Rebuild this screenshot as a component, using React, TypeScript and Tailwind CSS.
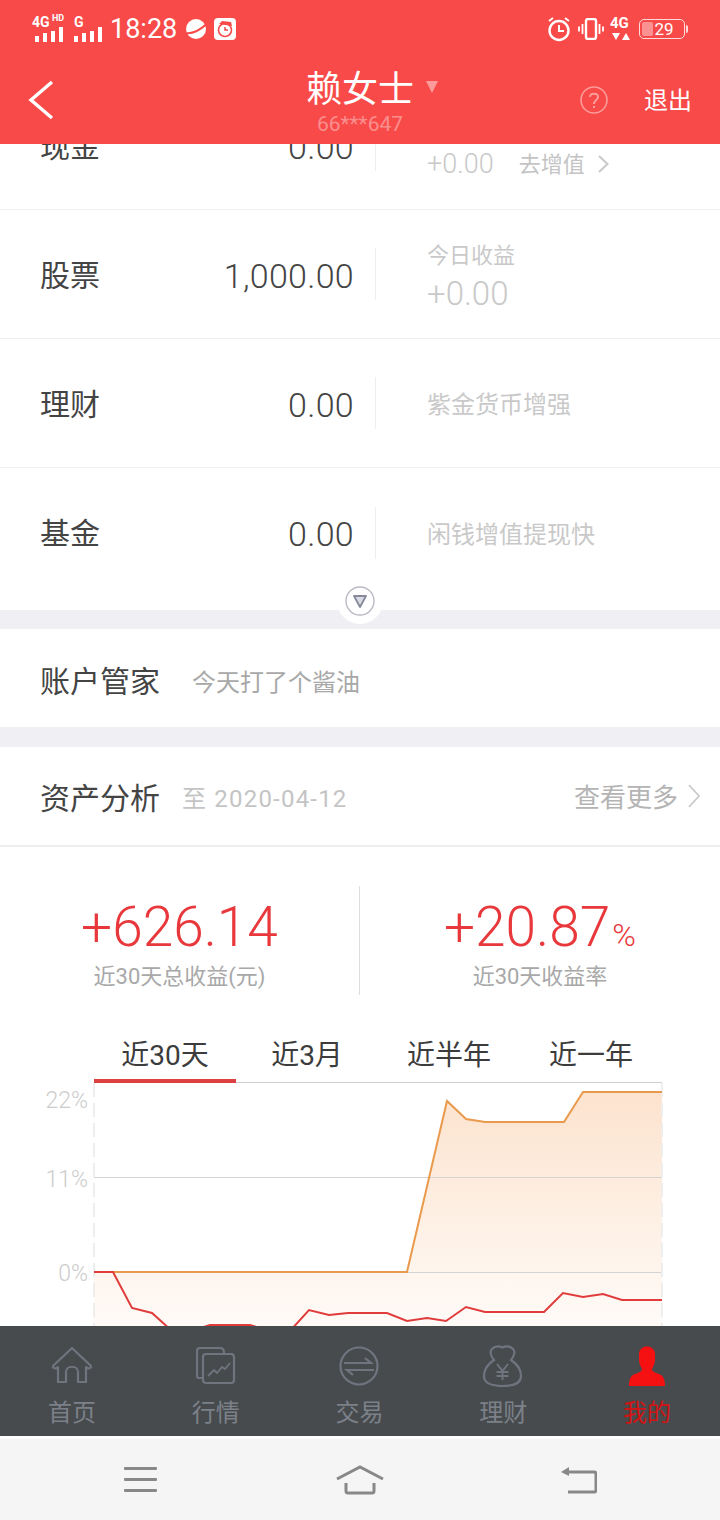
import React from 'react'

const font = { fontFamily: 'Roboto, "Noto Sans CJK SC", sans-serif' }

const assets = [
  { name: '现金', value: '0.00', gain: '+0.00', link: '去增值' },
  { name: '股票', value: '1,000.00', title: '今日收益', gain: '+0.00' },
  { name: '理财', value: '0.00', hint: '紫金货币增强' },
  { name: '基金', value: '0.00', hint: '闲钱增值提现快' },
]

const orange =
  '94,1272 407,1272 447,1101 466,1119 485,1122 564,1122 583,1092 662,1092'
const red =
  '94,1272 113,1272 132,1308 152,1313 172,1331 191,1331 210,1325 250,1325 270,1331 290,1331 309,1310 329,1315 348,1313 387,1313 407,1321 427,1318 446,1321 466,1307 485,1312 544,1312 563,1293 583,1297 603,1294 622,1300 662,1300'

function SignalBars() {
  return (
    <g fill="#fff">
      <rect x="0" y="9" width="4" height="6" />
      <rect x="8" y="6" width="4" height="9" />
      <rect x="16" y="4" width="4" height="11" />
      <rect x="24" y="0" width="4" height="15" />
    </g>
  )
}

function StatusBar() {
  return (
    <div className="flex h-[56px] items-center justify-between pl-[32px] pr-[32px] pt-[2px]">
      <div className="flex items-center">
        <div className="relative h-[26px] w-[32px]">
          <span className="absolute left-0 top-[-3px] text-[14px] font-bold leading-[18px] text-white">4G</span>
          <span className="absolute left-[20px] top-[-4px] text-[9px] font-bold leading-[12px] text-white">HD</span>
          <svg className="absolute bottom-0 left-[3px]" width="28" height="15">
            <SignalBars />
          </svg>
        </div>
        <div className="relative ml-[10px] h-[26px] w-[28px]">
          <span className="absolute left-[0px] top-[-3px] text-[14px] font-bold leading-[18px] text-white">G</span>
          <svg className="absolute bottom-0 left-0" width="28" height="15">
            <SignalBars />
          </svg>
        </div>
        <span className="ml-[8px] text-[27px] leading-[30px] text-white">18:28</span>
        <svg className="ml-[8px]" width="22" height="22" viewBox="0 0 22 22">
          <circle cx="11" cy="11" r="10" fill="#fff" />
          <path d="M0.5 15 C7 16 15 12 21.5 6" stroke="#f84a48" strokeWidth="2" fill="none" />
        </svg>
        <svg className="ml-[7px]" width="22" height="22" viewBox="0 0 22 22">
          <rect x="0" y="0" width="22" height="22" rx="4" fill="#fff" />
          <circle cx="11" cy="12" r="6.5" fill="none" stroke="#f84a48" strokeWidth="1.6" />
          <path d="M5 6 L8 3 L17 4 L18 8 Z" fill="#f84a48" />
          <path d="M11 9 V12 H14" fill="none" stroke="#f84a48" strokeWidth="1.5" />
        </svg>
      </div>
      <div className="flex items-center">
        <svg width="24" height="26" viewBox="0 0 24 26" fill="none" stroke="#fff">
          <circle cx="12" cy="14.5" r="9.5" strokeWidth="2.4" />
          <path d="M12 9 V15 H17" strokeWidth="2" />
          <path d="M2 5 L6 2 M22 5 L18 2" strokeWidth="2" />
        </svg>
        <svg className="ml-[7px]" width="26" height="22" viewBox="0 0 26 22" fill="none" stroke="#fff">
          <rect x="8" y="1" width="10" height="20" rx="2" strokeWidth="2.4" />
          <path d="M4.5 6 V16 M21.5 6 V16 M1 8.5 V13.5 M25 8.5 V13.5" strokeWidth="1.8" />
        </svg>
        <div className="relative ml-[6px] h-[24px] w-[22px]">
          <span className="absolute left-0 top-[-3px] text-[15px] font-bold leading-[18px] text-white">4G</span>
          <svg className="absolute bottom-0 left-[2px]" width="18" height="9" viewBox="0 0 18 9" fill="#fff">
            <path d="M0 1 H8 L4 8 Z M10 8 H18 L14 1 Z" />
          </svg>
        </div>
        <div className="relative ml-[7px] flex h-[20px] w-[46px] items-center justify-center rounded-[5px] border border-white/80">
          <div className="absolute bottom-[2px] left-[2px] top-[2px] w-[11px] rounded-[2px] bg-white/40" />
          <span className="relative ml-[4px] text-[17px] leading-[18px] text-white">29</span>
        </div>
        <div className="ml-[1px] h-[8px] w-[2px] rounded-r bg-white/80" />
      </div>
    </div>
  )
}

function Header() {
  return (
    <header className="h-[144px] shrink-0 bg-[#f84a48]">
      <StatusBar />
      <div className="relative flex h-[88px] justify-center">
        <svg className="absolute left-[28px] top-[24px]" width="26" height="40" viewBox="0 0 26 40" fill="none" stroke="#fff" strokeWidth="3.4">
          <path d="M24 2 L3 20 L24 38" />
        </svg>
        <div className="flex flex-col items-center pt-[12px]">
          <span className="text-[36px] leading-[44px] text-white">赖女士</span>
          <span className="text-[21px] leading-[24px] text-white/40">66***647</span>
        </div>
        <svg className="absolute left-[426px] top-[25px]" width="12" height="12" viewBox="0 0 12 12" fill="#ffffff" fillOpacity="0.45">
          <path d="M0 0 H12 L6 12 Z" />
        </svg>
        <svg className="absolute left-[580px] top-[30px]" width="28" height="28" viewBox="0 0 28 28" fill="none" stroke="#ffffff" strokeOpacity="0.45" strokeWidth="1.6">
          <circle cx="14" cy="14" r="13" />
          <path d="M10 11 C10 6.5 18 6.5 18 11 C18 14 14 14 14 18" strokeWidth="2" />
          <path d="M14 20 V22" strokeWidth="2" />
        </svg>
        <span className="absolute left-[644px] top-[29px] text-[24px] leading-[32px] text-white">退出</span>
      </div>
    </header>
  )
}

function AssetRow({ item, last }: { item: (typeof assets)[number]; last: boolean }) {
  return (
    <div className={last ? 'flex h-[129px] items-center pl-[40px]' : 'flex h-[129px] items-center border-b border-[#efefef] pl-[40px]'}>
      <span className="mt-[2px] w-[120px] text-[30px] text-[#444]">{item.name}</span>
      <span className="mt-[4px] w-[194px] text-right text-[34px] font-light tracking-[0.3px] text-[#444]">{item.value}</span>
      <div className="ml-[21px] h-[52px] w-px bg-[#eee]" />
      <div className={item.title ? 'ml-[51px] mt-[9px] text-[#c9c9c9]' : 'ml-[51px] text-[#c9c9c9]'}>
        {item.hint && <p className="mt-[4px] text-[24px]">{item.hint}</p>}
        {item.title && <p className="text-[22px] leading-[30px]">{item.title}</p>}
        {item.gain && (
          <div className={item.title ? 'flex items-center' : 'mt-[38px] flex items-center'}>
            <span className={item.title ? 'text-[33px] font-light leading-[46px]' : 'text-[27px] font-light leading-[46px]'}>{item.gain}</span>
            {item.link && <span className="ml-[25px] text-[22px] text-[#c4c4c4]">{item.link}</span>}
            {item.link && (
              <svg className="ml-[13px]" width="11" height="18" viewBox="0 0 11 18" fill="none" stroke="#c9c9c9" strokeWidth="2">
                <path d="M1 1 L9.5 9 L1 17" />
              </svg>
            )}
          </div>
        )}
      </div>
    </div>
  )
}

function Chart() {
  const tabs = ['近30天', '近3月', '近半年', '近一年']
  return (
    <div>
      <div className="ml-[94px] flex w-[568px] border-b border-[#cfcfcf]">
        {tabs.map((t, i) => (
          <div key={t} className={i === 0 ? 'relative h-[46px] w-[142px] text-center text-[28px] leading-[40px] text-[#3c3c3c]' : 'h-[46px] w-[142px] text-center text-[28px] leading-[40px] text-[#3c3c3c]'}>
            {t}
            {i === 0 && <div className="absolute bottom-[-1px] left-0 h-[4px] w-full bg-[#dc4040]" />}
          </div>
        ))}
      </div>
      <svg width="720" height="260" viewBox="0 1083 720 260" className="block">
        <defs>
          <linearGradient id="area" x1="0" y1="1092" x2="0" y2="1330" gradientUnits="userSpaceOnUse">
            <stop offset="0" stopColor="#fce3ce" />
            <stop offset="1" stopColor="#fffbf8" />
          </linearGradient>
        </defs>
        <polygon points={`${orange} 662,1340 94,1340`} fill="url(#area)" />
        <path d="M94 1177.5 H662 M94 1272.5 H662" stroke="#d4d4d4" strokeWidth="1" />
        <path d="M94 1083 V1340 M662 1083 V1340" stroke="#eeeeee" strokeWidth="2" strokeDasharray="14 6" />
        <polyline points={orange} fill="none" stroke="#e99a4c" strokeWidth="2" />
        <polyline points={red} fill="none" stroke="#e03c3c" strokeWidth="2" />
        <g fill="#cccccc" fontSize="23" fontWeight="300" textAnchor="end">
          <text x="88" y="1108">22%</text>
          <text x="88" y="1187">11%</text>
          <text x="88" y="1281">0%</text>
        </g>
      </svg>
    </div>
  )
}

function TabIcon({ name }: { name: string }) {
  const stroke = '#6f747f'
  if (name === '首页')
    return (
      <svg width="42" height="40" viewBox="0 0 42 40" fill="none" stroke={stroke} strokeWidth="2.2" strokeLinejoin="round">
        <path d="M2 20 L21 2 L40 20 C40 23 37 23 35 21 V36 H27 V26 C27 19 15 19 15 26 V36 H7 V21 C5 23 2 23 2 20 Z" />
      </svg>
    )
  if (name === '行情')
    return (
      <svg width="40" height="38" viewBox="0 0 40 38" fill="none" stroke={stroke} strokeWidth="2.2">
        <path d="M7 31 H3 Q1 31 1 29 V4 Q1 1 4 1 H24 Q28 1 28 6" />
        <rect x="7" y="7" width="31" height="29" rx="3" />
        <path d="M12 29 L18 23 L21 26 L26 20 L29 22 L34 16" strokeWidth="1.8" />
      </svg>
    )
  if (name === '交易')
    return (
      <svg width="40" height="40" viewBox="0 0 40 40" fill="none" stroke={stroke} strokeWidth="2.2">
        <circle cx="20" cy="20" r="18.5" />
        <path d="M5 17 H32 L26 12 M35 24 H8 L14 29" />
      </svg>
    )
  if (name === '理财')
    return (
      <svg width="40" height="42" viewBox="0 0 40 42" fill="none" stroke={stroke} strokeWidth="2.2">
        <path d="M11 15 C8 11 6 7 9 4 C12 1 16 1 19.5 2.5 C23 1 27 1 30 4 C33 7 31 11 28 15 C34 19 38 25 38 31 C38 38 31 41 19.5 41 C8 41 1 38 1 31 C1 25 5 19 11 15 Z" />
        <path d="M14 19 L19.5 26 L25 19 M19.5 26 V35 M13.5 27 H25.5 M13.5 31 H25.5" strokeWidth="2" />
      </svg>
    )
  return (
    <svg width="38" height="40" viewBox="0 0 38 40" fill="#f51111">
      <path d="M11 8 C11 -2 27 -2 27 8 V14 C27 18 25 21 24 23 C24 26 29 27 33 29 C36 31 37 35 37 40 H1 C1 35 2 31 5 29 C9 27 14 26 14 23 C13 21 11 18 11 14 Z" />
    </svg>
  )
}

function TabBar() {
  const tabs = ['首页', '行情', '交易', '理财', '我的']
  return (
    <nav className="grid h-[110px] shrink-0 grid-cols-5 bg-[#474b4e] pr-[1px]">
      {tabs.map((t) => (
        <div key={t} className="flex flex-col items-center pt-[18px]">
          <div className="flex h-[44px] items-center">
            <TabIcon name={t} />
          </div>
          <span className={t === '我的' ? 'mt-[9px] text-[24px] leading-[32px] text-[#d41212]' : 'mt-[9px] text-[24px] leading-[32px] text-[#7c8189]'}>{t}</span>
        </div>
      ))}
    </nav>
  )
}

function SystemNav() {
  return (
    <div className="mt-[3px] flex h-[81px] shrink-0 items-center justify-between bg-[#f5f5f5] pl-[124px] pr-[123px]">
      <svg width="34" height="26" viewBox="0 0 34 26" fill="#888">
        <rect y="0" width="33" height="3" rx="1" />
        <rect y="11" width="33" height="3" rx="1" />
        <rect y="22" width="33" height="3" rx="1" />
      </svg>
      <svg width="48" height="30" viewBox="0 0 48 30" fill="none" stroke="#888" strokeWidth="3">
        <path d="M1 14 L24 2 L47 14" />
        <path d="M10 18 V26 Q10 28 12 28 H36 Q38 28 38 26 V18" />
      </svg>
      <svg width="36" height="28" viewBox="0 0 36 28" fill="none" stroke="#888" strokeWidth="3">
        <path d="M4 6 H33 Q35 6 35 8 V24 Q35 26 33 26 H7" />
        <path d="M0 6 L8 1 V10 Z" fill="#888" stroke="none" />
      </svg>
    </div>
  )
}

export default function App() {
  return (
    <div className="flex h-[1520px] w-[720px] flex-col overflow-hidden bg-white" style={font}>
      <Header />
      <main className="min-h-0 flex-1 overflow-hidden">
        <div className="mt-[-63px]">
          <div className="relative pb-[13px]">
            {assets.map((a, i) => (
              <AssetRow key={a.name} item={a} last={i === assets.length - 1} />
            ))}
            <div className="absolute bottom-[-14px] left-[337px] z-10 flex h-[46px] w-[46px] items-center justify-center rounded-full bg-white">
              <svg width="30" height="30" viewBox="0 0 30 30" fill="none">
                <circle cx="15" cy="15" r="14" stroke="#b9bcc4" strokeWidth="1.4" />
                <path d="M9 10 H21 L15 21 Z" fill="#d9dbe4" stroke="#868a98" strokeWidth="1.8" strokeLinejoin="round" />
              </svg>
            </div>
          </div>
          <div className="h-[19px] bg-[#f0f0f4]" />
          <div className="flex h-[98px] items-center pl-[40px]">
            <span className="mt-[6px] text-[30px] text-[#444]">账户管家</span>
            <span className="ml-[32px] mt-[10px] text-[24px] text-[#a8a8a8]">今天打了个酱油</span>
          </div>
          <div className="h-[20px] bg-[#f0f0f4]" />
          <div className="flex h-[100px] items-center border-b-2 border-[#eeeeee] pl-[40px] pr-[19px]">
            <span className="mt-[4px] text-[30px] text-[#444]">资产分析</span>
            <span className="ml-[22px] mt-[6px] text-[24px] tracking-[1.2px] text-[#c4c4c4]">至 2020-04-12</span>
            <span className="ml-auto mt-[4px] text-[26px] text-[#b4b4b4]">查看更多</span>
            <svg className="ml-[10px]" width="13" height="24" viewBox="0 0 13 24" fill="none" stroke="#c9c9c9" strokeWidth="1.8">
              <path d="M1 1 L11 12 L1 23" />
            </svg>
          </div>
          <div className="mt-[39px] grid h-[109px] grid-cols-2">
            <div className="flex flex-col items-center border-r border-[#dddddd]">
              <span className="h-[82px] text-[55px] font-light leading-[82px] text-[#e8383c]">+626.14</span>
              <span className="text-[22px] leading-[18px] text-[#a8a8a8]">近30天总收益(元)</span>
            </div>
            <div className="flex flex-col items-center">
              <span className="h-[82px] text-[55px] font-light leading-[82px] text-[#e8383c]">
                +20.87<span className="ml-[2px] text-[32px] leading-none">%</span>
              </span>
              <span className="text-[22px] leading-[18px] text-[#a8a8a8]">近30天收益率</span>
            </div>
          </div>
          <div className="mt-[41px]">
            <Chart />
          </div>
        </div>
      </main>
      <TabBar />
      <SystemNav />
    </div>
  )
}
